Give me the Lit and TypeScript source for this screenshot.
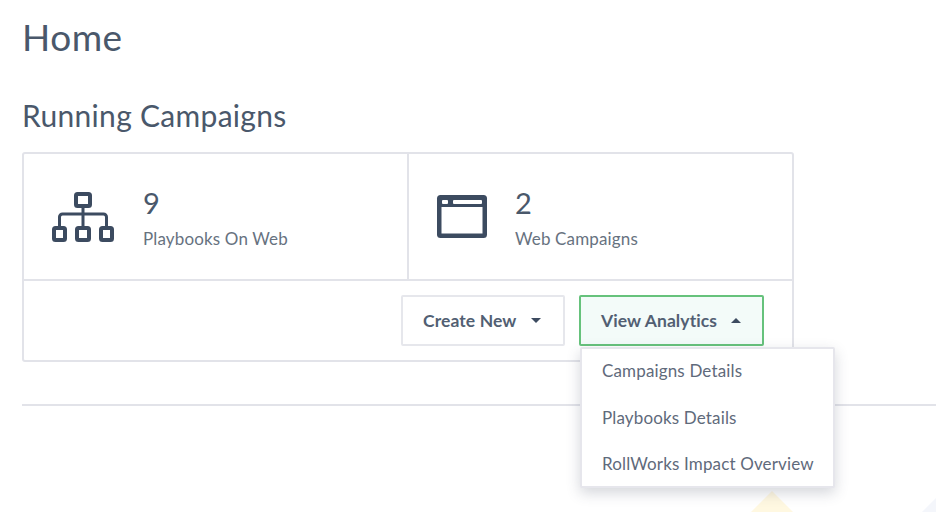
import { LitElement, html, css, svg } from "lit";
import { customElement } from "lit/decorators.js";

const orgIcon = svg`<svg class="icon" width="64" height="52" viewBox="0 0 64 52" fill="none" stroke="#3c4b60">
  <rect x="25" y="3" width="14" height="12" rx="1.5" stroke-width="4"/>
  <path d="M32 16V35M8.5 35V26a3 3 0 0 1 3-3H52.500a3 3 0 0 1 3 3V35" stroke-width="3"/>
  <rect x="3" y="37" width="11" height="12" rx="1.5" stroke-width="4"/>
  <rect x="26" y="37" width="12" height="12" rx="1.5" stroke-width="4"/>
  <rect x="50" y="37" width="11" height="12" rx="1.5" stroke-width="4"/>
</svg>`;

const windowIcon = svg`<svg class="icon" width="52" height="46" viewBox="0 0 52 46">
  <rect x="1" y="1" width="50" height="43" rx="3.5" fill="#3c4b60"/>
  <rect x="5.5" y="13" width="41" height="26.500" fill="#fff"/>
  <rect x="6" y="6" width="6" height="4" rx="1" fill="#fff"/>
  <rect x="17" y="6" width="29" height="4" rx="1" fill="#fff"/>
</svg>`;

@customElement("app-root")
export class AppRoot extends LitElement {
  static styles = css`
    :host {
      display: block;
      position: relative;
      width: 936px;
      height: 512px;
      overflow: hidden;
      background: #fff;
      color: #4a586b;
      font-family: Lato, "Open Sans", sans-serif;
    }
    .page { padding: 15px 0 0 22px; display: flex; flex-direction: column; position: relative; }
    h1 { margin: 0; font-size: 37px; font-weight: 400; line-height: 44px; letter-spacing: 0.5px; }
    h2 { margin: 38px 0 0; font-size: 30px; font-weight: 400; line-height: 36px; letter-spacing: 0.3px; }
    .card {
      margin-top: 19px;
      width: 772px;
      height: 210px;
      box-sizing: border-box;
      border: 2px solid #e2e3e9;
      border-radius: 3px;
      display: flex;
      flex-direction: column;
    }
    .stats { display: flex; height: 125px; border-bottom: 2px solid #e2e3e9; }
    .stat { flex: 1; display: flex; align-items: center; }
    .stat + .stat { border-left: 2px solid #e2e3e9; }
    .stat.a { padding-left: 27px; gap: 28px; }
    .stat.b { padding-left: 27px; gap: 27px; }
    .text { padding-top: 4px; }
    .num { font-size: 29px; line-height: 34px; color: #4a586b; }
    .label { font-size: 17px; line-height: 24px; letter-spacing: 0.15px; color: #67727f; margin-top: 7px; }
    .icon { display: block; }
    .actions { flex: 1; display: flex; justify-content: flex-end; align-items: center; gap: 14px; padding-right: 28px; }
    .btn {
      box-sizing: border-box;
      height: 51px;
      border: 2px solid #e6e7ec;
      border-radius: 2px;
      background: #fff;
      display: flex;
      align-items: center;
      padding: 0 20px;
      gap: 14px;
      font-size: 17.5px;
      font-weight: 700;
      letter-spacing: 0.1px;
      color: #525f73;
      white-space: nowrap;
    }
    .btn.open { border-color: #66c27c; background: #f3fbf9; width: 185px; }
    .btn.create { width: 164px; gap: 15px; }
    .caret { width: 0; height: 0; border-left: 5px solid transparent; border-right: 5px solid transparent; }
    .caret.down { border-top: 5px solid #3c4b60; }
    .caret.up { border-bottom: 5px solid #3c4b60; }
    .rule { margin-top: 42px; height: 2px; background: #e2e3e9; }
    .menu {
      position: absolute;
      left: 580px;
      top: 347px;
      width: 255px;
      height: 141px;
      box-sizing: border-box;
      background: #fff;
      border: 2px solid #e6e6ec;
      border-radius: 2px;
      box-shadow: 0 5px 14px rgba(60, 70, 90, 0.22);
      padding: 0 20px;
      display: flex;
      flex-direction: column;
      font-size: 17px;
      letter-spacing: 0.15px;
      color: #5f6a7b;
    }
    .menu div { flex: none; height: 46.5px; line-height: 44px; white-space: nowrap; }
    .deco-y {
      position: absolute; left: 751px; top: 491px; width: 0; height: 0;
      border-left: 21px solid transparent; border-right: 21px solid transparent;
      border-bottom: 21px solid #fff8e1;
    }
    .deco-b {
      position: absolute; right: 0; bottom: 0; width: 0; height: 0;
      border-left: 14px solid transparent;
      border-bottom: 14px solid #f4f6fb;
    }
  `;

  render() {
    return html`
      <div class="deco-y"></div>
      <div class="deco-b"></div>
      <div class="page">
        <h1>Home</h1>
        <h2>Running Campaigns</h2>
        <div class="card">
          <div class="stats">
            <div class="stat a">${orgIcon}<div class="text"><div class="num">9</div><div class="label">Playbooks On Web</div></div></div>
            <div class="stat b">${windowIcon}<div class="text"><div class="num">2</div><div class="label">Web Campaigns</div></div></div>
          </div>
          <div class="actions">
            <div class="btn create">Create New <span class="caret down"></span></div>
            <div class="btn open">View Analytics <span class="caret up"></span></div>
          </div>
        </div>
        <div class="rule"></div>
      </div>
      <div class="menu">
        <div>Campaigns Details</div>
        <div>Playbooks Details</div>
        <div>RollWorks Impact Overview</div>
      </div>
    `;
  }
}
